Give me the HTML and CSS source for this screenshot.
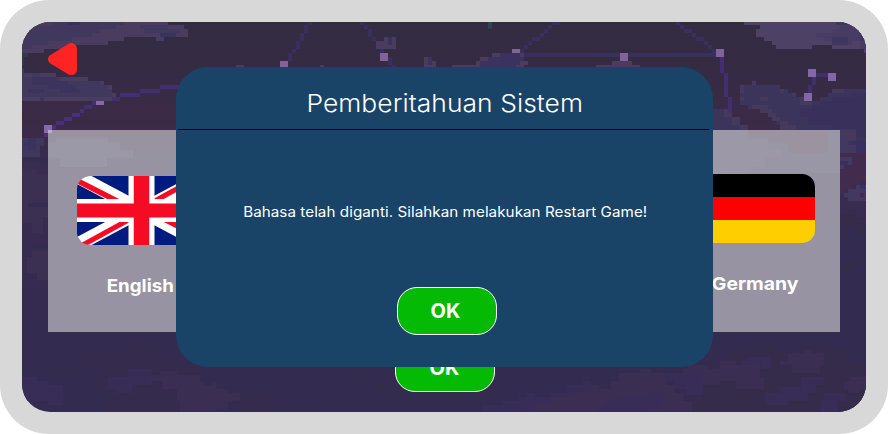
FILE: index.html
```
<!DOCTYPE html>
<html lang="id">
<head>
<meta charset="utf-8">
<title>Pemberitahuan Sistem</title>
<link rel="stylesheet" href="styles.css">
</head>
<body>
<div class="frame">
<main class="stage">
<svg class="sky" viewBox="22 22 844 390" shape-rendering="crispEdges" aria-hidden="true">
<defs>
<linearGradient id="night" x1="0" y1="0" x2="0" y2="1"><stop offset="0" stop-color="#322c42"/><stop offset=".12" stop-color="#352b43"/><stop offset=".27" stop-color="#3c2a47"/><stop offset=".36" stop-color="#382c50"/><stop offset=".7" stop-color="#352b50"/><stop offset="1" stop-color="#332b50"/></linearGradient>
</defs>
<rect x="22" y="22" width="844" height="390" fill="url(#night)"/>
<!-- upper left clouds and constellation -->
<g transform="scale(.33333)">
<path fill="#493c5e" d="M66 66H504V75H552V87H564V111H492V123H468V111H372V123H324V135H216V147H132V159H66Z"/>
<path fill="#41385e" d="M66 78H156V66H372V75H348V87H300V99H276V111H216V123H144V135H96V147H66ZM420 75H504V87H540V99H480V99H432V87H420Z"/>
<path fill="#393260" d="M204 66H240V75H204ZM480 99H528V111H480Z"/>
<path fill="#2f3b4b" d="M66 159H84V171H72V195H66Z"/>
<path fill="#41385e" d="M66 207H72V219H168V231H264V243H312V255H336V279H348V291H336V303H66Z"/>
<path fill="#493c5e" d="M72 219H96V231H72ZM120 219H168V231H120ZM180 231H264V243H180ZM300 243H312V255H300ZM324 255H336V267H324ZM336 279H348V291H336ZM66 291H120V303H66ZM132 291H336V303H132Z"/>
<path fill="#3b345d" d="M96 231H168V243H204V255H228V267H240V279H180V267H144V255H96ZM84 267H132V279H84ZM120 291H132V303H120Z"/>
<path fill="#442e72" d="M480 255H540V267H480ZM420 267H480V279H420ZM360 279H420V291H360ZM336 291H360V303H336ZM276 303H288V315H276ZM252 315H276V327H252Z"/>
<path fill="#492e82" d="M240 327H252V339H240ZM216 339H240V351H216ZM192 351H216V363H192ZM168 363H192V375H168ZM156 375H168V387H156ZM132 399H144V411H132Z"/>
<path fill="#8869b0" d="M132 375H156V399H132ZM288 303H312V315H288Z"/>
<path fill="#806497" d="M840 183H864V201H840Z"/>
<path fill="#493c5e" d="M708 195H732V203H708Z"/>
<path fill="#3a2d60" d="M864 159H876V183H864ZM876 147H888V159H876ZM888 123H900V147H888Z"/>
</g>
<!-- middle constellation -->
<g transform="translate(290 0) scale(.33333)">
<path fill="#392e5e" d="M54 66H66V75H54ZM42 75H54V99H42ZM30 99H42V123H30ZM18 123H30V147H18ZM6 147H18V159H6ZM-6 159H6V183H-6ZM210 66H222V75H210ZM222 75H234V87H222ZM234 87H246V111H234ZM246 111H258V123H246ZM270 147H282V159H270ZM294 171H306V195H294ZM306 195H318V203H306ZM786 66H810V75H786ZM774 75H786V87H774ZM762 87H774V99H762ZM750 99H762V111H750ZM726 111H750V123H726ZM714 123H726V135H714ZM702 135H714V147H702ZM690 147H702V159H690ZM702 159H900V171H702Z"/>
<path fill="#493c5e" d="M258 123H282V111H318V147H258ZM402 171H426V183H438V202H402ZM606 159H702V183H714V195H702V203H486V195H558V183H570V171H606ZM90 195H102V203H90Z"/>
<path fill="#3b325f" d="M294 111H306V135H294ZM414 171H426V195H414ZM570 183H594V171H630V159H690V171H702V183H690V195H678V202H570Z"/>
<path fill="#806497" d="M270 159H294V183H270ZM666 147H690V159H666Z"/>
<path fill="#354050" d="M594 66H606V87H594Z"/>
</g>
<!-- upper right clouds and constellation -->
<g transform="translate(588 0) scale(.33333)">
<path fill="#4d4166" d="M468 66H834V159H828V147H732V135H672V147H564V135H552V123H528V111H504V87H516V75H468Z"/>
<path fill="#473c63" d="M684 99H732V87H756V75H780V66H834V147H816V123H792V135H732V123H708V111H684Z"/>
<path fill="#3f3660" d="M744 66H780V75H744ZM732 111H780V135H732ZM816 99H834V123H816Z"/>
<path fill="#3b345b" d="M456 255H576V267H600V279H624V291H648V303H696V291H720V279H768V267H834V520H375V327H432V351H456V375H480V390H576V375H564V351H540V339H516V327H480V315H456Z"/>
<path fill="#463a5c" d="M456 255H468V279H456ZM492 243H504V255H492ZM456 291H468V303H456ZM516 291H540V303H516ZM576 267H588V279H576ZM612 279H624V291H612ZM636 291H648V303H672V315H636ZM732 267H768V279H732ZM492 315H540V327H552V339H564V351H576V363H600V375H624V390H576V363H552V351H540V339H516V327H492ZM408 327H432V351H408ZM432 351H456V375H432ZM456 375H480V390H456ZM756 390H804V423H780V447H756Z"/>
<path fill="#39315c" d="M696 303H732V291H792V279H834V411H804V387H732V375H660V351H636V327H672V315H696Z"/>
<path fill="#3a3060" d="M-2 159H384V171H-2ZM264 66H276V75H264ZM276 75H288V87H276ZM288 87H312V99H288ZM312 99H324V111H312ZM324 111H348V123H324ZM348 123H360V135H348ZM360 135H372V147H360ZM372 147H384V159H372Z"/>
<path fill="#442e72" d="M396 171H408V219H420V291H432V339H420V291H408V219H396ZM684 219H720V231H684ZM672 231H684V255H672ZM660 255H672V279H660Z"/>
<path fill="#493c5e" d="M72 183H132V195H156V203H24V195H72Z"/>
<path fill="#806497" d="M96 159H120V183H96ZM384 147H408V171H384Z"/>
<path fill="#8168a9" d="M660 207H684V231H660ZM720 219H744V243H720ZM648 279H672V303H648Z"/>
</g>
<!-- lower left -->
<g transform="translate(0 130) scale(.33333)">
<path fill="#40375f" d="M66 24H132V48H120V81H66ZM168 24H324V36H360V60H400V84H320V110H180V84H144V36H168Z"/>
<path fill="#3a335c" d="M84 24H108V60H84V48H72V36H84Z"/>
<path fill="#3b2f52" d="M66 120H108V132H144V260H130V310H96V280H66ZM96 360H144V450H110V430H80V380H96Z"/>
<path fill="#342c4e" d="M72 84H144V108H120V96H72ZM96 348H144V360H96ZM84 220H144V230H84Z"/>
<path fill="#342b4d" d="M144 716H216V704H240V668H324V656H384V632H420V644H456V660H492V684H528V704H600V850H300V812H324V776H276V740H312V728H288V716H240V728H144Z"/>
<path fill="#372d56" d="M66 740H110V752H144V764H190V824H144V812H66ZM324 740H384V716H456V764H396V788H348V776H324Z"/>
<path fill="#3a2f52" d="M450 734H480V722H530V734H600V812H530V776H490V752H450Z"/>
</g>
<!-- lower right -->
<g transform="translate(688 130) scale(.33333)">
<path fill="#9a80b4" d="M144 117H156V132H144Z"/>
<path fill="#3f2c4c" d="M180 0H420V70H300V40H240V20H180Z"/>
<path fill="#412c4e" d="M456 69H534V153H516V165H492V177H468V189H456Z"/>
<path fill="#433960" d="M456 20H480V45H505V69H456ZM456 81H492V105H468V117H456ZM480 177H504V165H534V213H480V201H468V189H480ZM75 0H180V30H240V60H280V80H230V110H180V132H75Z"/>
<path fill="#393060" d="M456 93H480V105H456ZM492 33H534V69H504V45H492ZM516 165H530V177H516Z"/>
<path fill="#412b4c" d="M516 189H528V201H516Z"/>
<path fill="#382c50" d="M456 213H534V284H456Z"/>
<path fill="#342b51" d="M456 284H534V610H456ZM50 610H534V850H50Z"/>
<path fill="#352c4c" d="M456 250H480V238H504V262H534V310H504V290H480V320H456ZM456 400H490V388H534V405H504V430H456ZM0 716H60V704H110V668H156V656H220V644H276V668H312V656H360V644H420V660H480V700H534V850H0Z"/>
<path fill="#3a2f52" d="M20 704H60V716H96V692H144V704H216V740H228V776H144V752H96V764H30V740H0V700H20ZM276 692H300V668H348V656H372V668H408V704H396V728H312V704H276ZM468 752H490V740H534V776H516V788H480V776H468Z"/>
<path fill="#372d56" d="M160 692H180V680H250V716H220V704H160ZM230 788H276V770H340V740H408V764H384V788H360V812H300V824H230ZM408 788H470V812H450V845H400V812H408Z"/>
</g>
<!-- cloud bank along the bottom -->
<g transform="translate(180 270) scale(.33333)">
<path fill="#342b4d" d="M180 378H204V366H240V358H264V370H284V426H200V410H180ZM320 414H348V406H396V414H412V426H320ZM490 294H540V306H570V318H524V306H490ZM590 342H636V360H690V378H876V358H930V342H960V366H930V378H860V384H700V378H620V366H590Z"/>
<path fill="#3a2f52" d="M0 320H36V333H72V345H96V333H108V357H144V369H180V393H144V417H108V426H0ZM1065 405H1090V381H1160V357H1184V345H1208V333H1232V345H1256V357H1292V333H1316V309H1380V297H1412V309H1460V345H1484V369H1508V393H1536V426H1065Z"/>
<path fill="#372d56" d="M910 405H970V393H1018V381H1042V369H1066V381H1112V369H1160V345H1208V333H1232V369H1184V381H1112V405H1064V426H910ZM1250 405H1268V393H1316V381H1400V369H1450V417H1400V426H1250ZM1460 309H1508V297H1568V375H1520V357H1484V333H1460Z"/>
</g>
</svg>

<button class="back" aria-label="Kembali"><svg viewBox="0 0 29 32"><path d="M20.2 .9 2.5 12C-.8 14-.8 18.500 2.500 20.500L20.200 31.200C24 33.500 29 31.500 29 26.500V6C29 1 24-1.400 20.200 .9Z" fill="#ff2424"/></svg></button>

<section class="languages">
<div class="language english">
<svg class="flag" viewBox="0 0 129 69" preserveAspectRatio="none">
<rect width="129" height="69" fill="#001b80"/>
<path d="M-4-2 133 71M133-2-4 71" stroke="#fff" stroke-width="14"/>
<path d="M-2 3.500 63 36.700M131 65.500 66 32.300" stroke="#f50b23" stroke-width="5.500"/>
<path d="M4 70 64 37M125-1 65 32" stroke="#f50b23" stroke-width="5"/>
<path d="M64.500 0V69" stroke="#fff" stroke-width="26"/>
<path d="M0 34.500H129" stroke="#fff" stroke-width="23"/>
<path d="M64.500 0V69" stroke="#f50b23" stroke-width="15.500"/>
<path d="M0 34.500H129" stroke="#f50b23" stroke-width="14"/>
</svg>
<span class="name">English</span>
</div>
<div class="language germany">
<svg class="flag" viewBox="0 0 129 69" preserveAspectRatio="none"><rect y="46" width="129" height="23" fill="#ffce00"/><rect y="23" width="129" height="23" fill="#f00"/><rect width="129" height="23" fill="#000"/></svg>
<span class="name">Germany</span>
</div>
</section>
<button class="ok confirm">OK</button>

<div class="dialog" role="dialog" aria-labelledby="dialog-title">
<h1 id="dialog-title"><span>Pemberitahuan Sistem</span></h1>
<p><span>Bahasa telah diganti. Silahkan melakukan Restart Game!</span></p>
<button class="ok">OK</button>
</div>
</main>
</div>
</body>
</html>
```
FILE: styles.css
```
* { box-sizing: border-box; }
body { margin: 0; background: #fff; font-family: Inter, "Open Sans", sans-serif; }
button { margin: 0; padding: 0; border: 0; background: none; font: inherit; }
.frame { width: 888px; height: 434px; padding: 22px; border-radius: 49px; background: #d8d8d8; }
.stage { position: relative; display: flex; flex-direction: column; height: 390px; overflow: hidden; border-radius: 28px; }
.sky { position: absolute; inset: 0; width: 844px; height: 390px; }
.back { position: relative; flex: none; width: 29px; height: 32px; margin: 21px 0 0 26px; }
.back svg { display: block; width: 29px; height: 32px; }
.languages { position: relative; flex: none; display: flex; justify-content: space-between; height: 202px; margin: 55px 26px 0; padding: 44px 25px 0 29px; background: rgba(217, 217, 217, .6); }
.language { display: flex; flex-direction: column; align-items: center; width: 129px; }
.english { padding-top: 2px; }
.flag { flex: none; width: 129px; height: 69px; border-radius: 13px; }
.name { margin-top: 29px; color: #fff; font-size: 18px; line-height: 24px; font-weight: 700; white-space: nowrap; }
.english .name { margin-right: 2px; transform: scaleX(1.04); }
.germany .name { margin-left: 9px; transform: scaleX(1.08); }
.ok { flex: none; display: block; width: 100px; height: 48px; padding-right: 3px; border: 1px solid #fff; border-radius: 20px; background: #04ba04; color: #fff; font-size: 20px; line-height: 46px; font-weight: 700; text-align: center; }
.confirm { position: relative; align-self: center; margin: 12px 0 0 2px; padding-right: 1px; }
.dialog { position: absolute; left: 154px; top: 45px; display: flex; flex-direction: column; align-items: center; width: 537px; height: 300px; border-radius: 32px; background: #194467; color: #fff; }
.dialog h1 { width: 531px; height: 63px; margin: 0 2px 0 0; padding: 21px 0 0 2px; border-bottom: 1px solid #000; font-size: 24px; line-height: 32px; font-weight: 300; text-align: center; white-space: nowrap; }
.dialog h1 span { display: inline-block; transform: scaleX(1.1); letter-spacing: .05px; }
.dialog p { margin: 72px 0 0 1px; font-size: 14px; line-height: 20px; font-weight: 400; white-space: nowrap; letter-spacing: .05px; }
.dialog p span { display: inline-block; transform: scaleX(1.085); }
.dialog .ok { margin: 65px 0 0 5px; }
```
